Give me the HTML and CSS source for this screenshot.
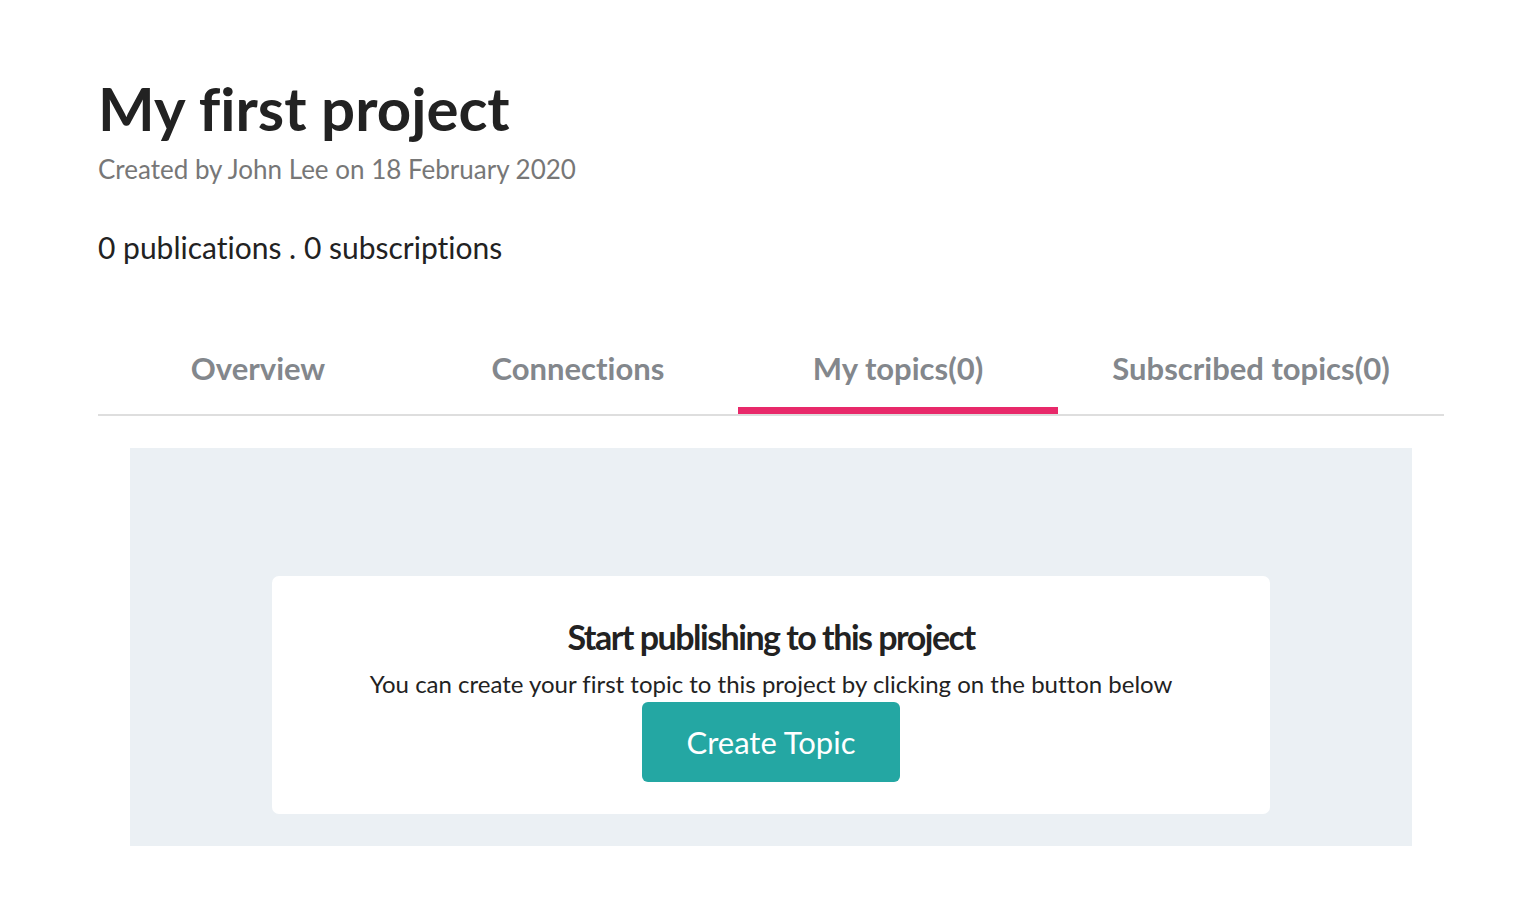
FILE: index.html
```html
<!DOCTYPE html>
<html lang="en">
<head>
<meta charset="utf-8">
<title>My first project</title>
<link rel="stylesheet" href="styles.css">
</head>
<body>
<main class="page">
  <header class="project-head">
    <h1 class="project-title">My first project</h1>
    <p class="project-meta">Created by John Lee on 18 February 2020</p>
    <p class="project-stats">0 publications . 0 subscriptions</p>
  </header>
  <nav class="tabs">
    <a class="tab">Overview</a>
    <a class="tab">Connections</a>
    <a class="tab tab-active">My topics(0)</a>
    <a class="tab">Subscribed topics(0)</a>
  </nav>
  <section class="panel">
    <div class="empty-card">
      <h2 class="empty-title">Start publishing to this project</h2>
      <p class="empty-text">You can create your first topic to this project by clicking on the button below</p>
      <button class="btn-create">Create Topic</button>
    </div>
  </section>
</main>
</body>
</html>
```

FILE: styles.css
```css
html, body {
  margin: 0;
  padding: 0;
  background: #ffffff;
}
body {
  font-family: "Lato", "Noto Sans", "Liberation Sans", sans-serif;
  font-variant-ligatures: none;
  color: #222222;
}
.page {
  width: 1346px;
  padding: 72px 0 0 98px;
}
.project-title {
  margin: 0;
  font-size: 60px;
  font-weight: 700;
  line-height: 72px;
  color: #222222;
}
.project-meta {
  margin: 7px 0 0;
  font-size: 26px;
  line-height: 36px;
  color: #777777;
}
.project-stats {
  margin: 40px 0 0;
  font-size: 30px;
  line-height: 40px;
  color: #222222;
}
.tabs {
  display: grid;
  grid-template-columns: 320px 320px 320px 1fr;
  margin-top: 70px;
  border-bottom: 2px solid #dedede;
}
.tab {
  display: block;
  text-align: center;
  font-size: 31px;
  font-weight: 700;
  color: #83878c;
  line-height: 40px;
  padding: 11px 0 19px;
  border-bottom: 7px solid transparent;
}
.tab-active {
  border-bottom-color: #e8296a;
}
.panel {
  margin: 32px 32px 0;
  background: #ebf0f4;
  padding: 128px 142px 32px;
}
.empty-card {
  background: #ffffff;
  border-radius: 7px;
  padding: 38px 0 32px;
  display: flex;
  flex-direction: column;
  align-items: center;
}
.empty-title {
  margin: 0;
  font-size: 34px;
  font-weight: 700;
  letter-spacing: -1.5px;
  line-height: 46px;
  color: #222222;
}
.empty-text {
  margin: 6px 0 0;
  font-size: 24px;
  line-height: 36px;
  color: #222222;
}
.btn-create {
  width: 258px;
  height: 80px;
  border: none;
  border-radius: 6px;
  background: #24a7a3;
  color: #ffffff;
  font-family: inherit;
  font-variant-ligatures: none;
  font-size: 31px;
  font-weight: 400;
  cursor: pointer;
}
```
